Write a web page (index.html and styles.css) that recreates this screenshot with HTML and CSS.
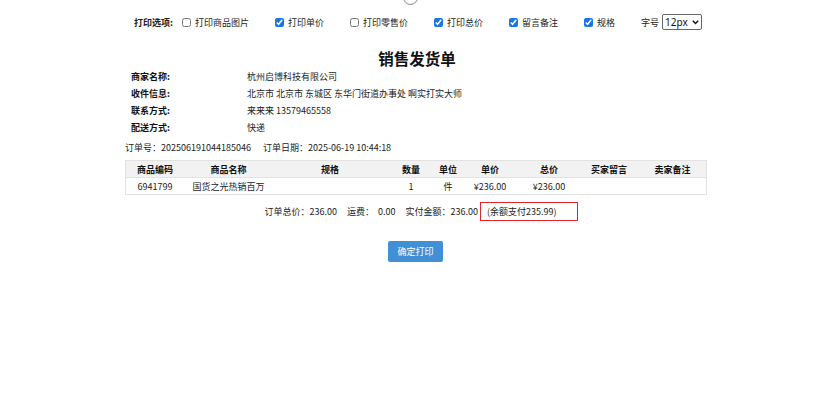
FILE: index.html
```html
<!DOCTYPE html>
<html lang="zh-CN">
<head>
<meta charset="UTF-8" />
<meta name="viewport" content="width=device-width, initial-scale=1" />
<title>销售发货单 - 打印</title>
<link rel="stylesheet" href="styles.css">
</head>
<body>

<div class="spinner"></div>

<div class="options">
  <span class="opt-title">打印选项:</span>
  <label class="opt"><input type="checkbox" />打印商品图片</label>
  <label class="opt"><input type="checkbox" checked />打印单价</label>
  <label class="opt"><input type="checkbox" />打印零售价</label>
  <label class="opt"><input type="checkbox" checked />打印总价</label>
  <label class="opt"><input type="checkbox" checked />留言备注</label>
  <label class="opt"><input type="checkbox" checked />规格</label>
  <label class="opt size">字号
    <span class="select-wrap">
      <select>
        <option>12px</option>
        <option>14px</option>
      </select>
      <svg class="chev" width="7" height="5" viewBox="0 0 7 5"><path d="M0.8 0.8 L3.5 3.6 L6.2 0.8" fill="none" stroke="#111" stroke-width="1.4"/></svg>
    </span>
  </label>
</div>

<div class="sheet">
  <h1>销售发货单</h1>

  <div class="info">
    <div class="row"><span class="label">商家名称:</span><span>杭州启博科技有限公司</span></div>
    <div class="row"><span class="label">收件信息:</span><span>北京市 北京市 东城区 东华门街道办事处 啊实打实大师</span></div>
    <div class="row"><span class="label">联系方式:</span><span>来来来 13579465558</span></div>
    <div class="row"><span class="label">配送方式:</span><span>快递</span></div>
  </div>

  <div class="order-line">
    <span>订单号：202506191044185046</span>
    <span>订单日期：2025-06-19 10:44:18</span>
  </div>

  <table class="goods">
    <thead>
      <tr>
        <th>商品编码</th><th>商品名称</th><th>规格</th><th>数量</th><th>单位</th>
        <th>单价</th><th>总价</th><th>买家留言</th><th>卖家备注</th>
      </tr>
    </thead>
    <tbody>
      <tr>
        <td>6941799</td><td>国货之光热销百万</td><td></td><td>1</td><td>件</td>
        <td>¥236.00</td><td>¥236.00</td><td></td><td></td>
      </tr>
    </tbody>
  </table>

  <div class="summary">
    <span>订单总价：236.00</span>
    <span>运费：&nbsp; 0.00</span>
    <span>实付金额：236.00</span><span class="paid">(余额支付235.99)</span>
  </div>

  <div class="actions">
    <button class="btn-print">确定打印</button>
  </div>
</div>

</body>
</html>
```

FILE: styles.css
```css
body {
  margin: 0;
  padding: 0;
  background: #fff;
  color: #222;
  font-family: "Noto Sans CJK SC", "Noto Sans", sans-serif;
  font-size: 9px;
}
.spinner {
  position: absolute;
  top: -10px;
  left: 403px;
  width: 13px;
  height: 13px;
  border: 1px solid #888;
  border-radius: 50%;
}
.options {
  display: flex;
  justify-content: center;
  align-items: center;
  gap: 26px;
  height: 16px;
  margin-top: 14px;
  margin-left: 2px;
}
.opt-title {
  font-weight: 700;
  margin-right: -17px;
}
.opt {
  display: flex;
  align-items: center;
}
.opt input {
  width: 9px;
  height: 9px;
  margin: 0 4px 0 0;
  accent-color: #1a73e8;
}
.select-wrap {
  position: relative;
  display: inline-flex;
  margin-left: 3px;
}
.select-wrap select {
  appearance: none;
  -webkit-appearance: none;
  width: 40px;
  height: 16px;
  font-size: 10px;
  font-family: "Noto Sans", sans-serif;
  padding: 0 0 0 2px;
  border: 1px solid #666;
  border-radius: 2px;
  background: #fff;
  color: #111;
}
.select-wrap .chev {
  position: absolute;
  right: 3px;
  top: 6px;
  pointer-events: none;
}
.sheet {
  width: 580px;
  margin: 0 auto;
}
h1 {
  margin: 18px 0 0;
  height: 20px;
  line-height: 20px;
  text-align: center;
  font-size: 15.5px;
  font-weight: 700;
  color: #111;
}
.info {
  padding-left: 4px;
}
.info .row {
  display: flex;
  height: 17px;
  line-height: 17px;
}
.info .label {
  width: 116px;
  font-weight: 700;
  color: #111;
}
.order-line {
  display: flex;
  gap: 12px;
  height: 16px;
  line-height: 16px;
  margin-top: 4px;
  margin-left: -2px;
}
.goods {
  width: 580px;
  margin-top: 4px;
  margin-left: -2px;
  border-collapse: collapse;
  table-layout: fixed;
}
.goods th:nth-child(1) { width: 58px; }
.goods th:nth-child(2) { width: 89px; }
.goods th:nth-child(3) { width: 114px; }
.goods th:nth-child(4) { width: 48px; }
.goods th:nth-child(5) { width: 26px; }
.goods th:nth-child(6) { width: 58px; }
.goods th:nth-child(7) { width: 60px; }
.goods th:nth-child(8) { width: 60px; }
.goods th:nth-child(9) { width: 67px; }
.goods th, .goods td {
  height: 16px;
  padding: 0;
  text-align: center;
  border-top: 1px solid #e2e2e2;
  border-bottom: 1px solid #e2e2e2;
  white-space: nowrap;
}
.goods th:first-child, .goods td:first-child {
  border-left: 1px solid #e2e2e2;
}
.goods th:last-child, .goods td:last-child {
  border-right: 1px solid #e2e2e2;
}
.goods th {
  background: #f2f2f2;
  font-weight: 700;
  color: #111;
}
.summary {
  display: flex;
  justify-content: center;
  align-items: center;
  gap: 10px;
  margin-top: 7px;
  height: 19px;
  padding-left: 8px;
}
.summary .paid {
  margin-left: -8px;
  height: 17px;
  line-height: 17px;
  padding: 0 20px 0 6px;
  border: 1px solid #e0262b;
}
.actions {
  display: flex;
  justify-content: center;
  margin-top: 20px;
  padding-right: 3px;
}
.btn-print {
  width: 55px;
  height: 21px;
  padding: 0;
  border: none;
  border-radius: 2px;
  background: #418fd5;
  color: #fff;
  font-family: inherit;
  font-size: 9px;
  cursor: pointer;
}
```
